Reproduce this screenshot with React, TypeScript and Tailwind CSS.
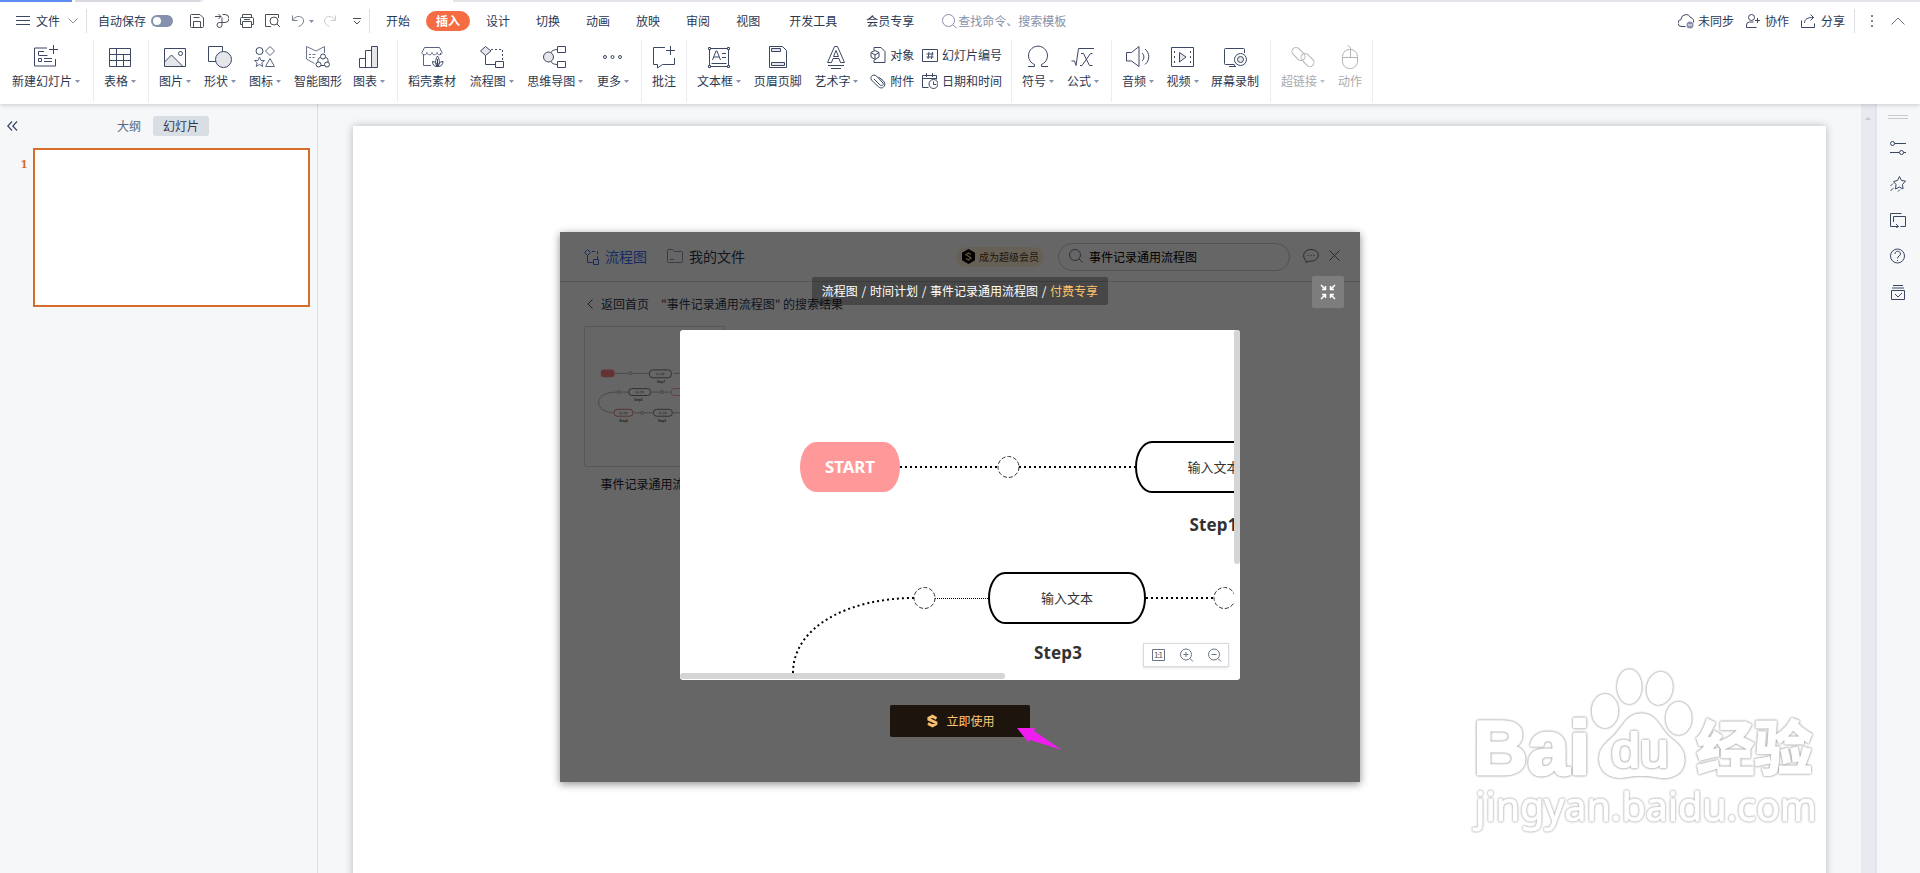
import React from 'react';

const INK = '#3b4763';
const FILL = '#e4e6ea';

interface GlyphProps {
    w?: number;
    h?: number;
    color?: string;
    className?: string;
    children: React.ReactNode;
}

const Glyph: React.FC<GlyphProps> = ({ w = 24, h = 24, color = INK, className = '', children }) => (
    <svg width={w} height={h} viewBox={`0 0 ${w} ${h}`} fill="none" stroke={color} strokeWidth="1" className={`shrink-0 ${className}`}>
        {children}
    </svg>
);

const Caret: React.FC<{ muted?: boolean }> = ({ muted }) => (
    <svg width="5" height="3" viewBox="0 0 5 3" className="shrink-0" fill={muted ? '#b9bfcd' : '#8791ab'}>
        <path d="M0 0h5L2.500 3z" />
    </svg>
);

interface RibbonItemProps {
    label: string;
    caret?: boolean;
    muted?: boolean;
    className?: string;
    children: React.ReactNode;
}

const RibbonItem: React.FC<RibbonItemProps> = ({ label, caret, muted, className = '', children }) => (
    <div className={`flex shrink-0 flex-col items-center pt-[5px] ${className}`}>
        <Glyph color={muted ? '#b4b4b4' : INK}>{children}</Glyph>
        <div className={`mt-1 flex h-4 items-center gap-[3px] ${muted ? 'text-[#aaaaaa]' : ''}`}>
            <span>{label}</span>
            {caret && <Caret muted={muted} />}
        </div>
    </div>
);

const RibbonGroup: React.FC<{ className?: string; children: React.ReactNode }> = ({ className = '', children }) => (
    <div className={`flex h-[62px] shrink-0 justify-between border-r border-[#ececf0] ${className}`}>{children}</div>
);

const Divider = ({ className = '' }: { className?: string }) => <div className={`h-6 w-px shrink-0 bg-[#dddde5] ${className}`} />;

const TabBar = () => (
    <div className="flex h-[38px] items-center">
        <Glyph w={14} h={12} className="ml-4"><path d="M0 1.500h14M0 5.500h14M0 9.500h14" /></Glyph>
        <span className="ml-[6px]">文件</span>
        <Glyph w={10} h={6} className="ml-2" color="#8c8f99"><path d="M.5.5 5 5 9.500.5" /></Glyph>
        <Divider className="ml-2" />
        <span className="ml-[11px]">自动保存</span>
        <div className="ml-[5px] flex h-3 w-[22px] items-center rounded-full bg-[#8391ad] pl-[2px]">
            <div className="size-2 rounded-full bg-white" />
        </div>
        <Glyph w={14} h={14} className="ml-[17px]" color="#4a4e57">
            <path d="M.5 1.500a1 1 0 0 1 1-1h8.500l3.500 3.500v8.500a1 1 0 0 1-1 1h-11a1 1 0 0 1-1-1zM3.500 3.500h6M3.500 13V7.500h7V13" />
        </Glyph>
        <Glyph w={14} h={14} className="ml-[11px]" color="#4a4e57">
            <path d="M0 2.500h6M3.500 0 6 2.500 3.500 5M7.500.5H10a3.500 3.500 0 0 1 0 8H4.500" />
            <path d="M4.500 8.500a2.500 2.500 0 1 0 2.500 2.500V3.500" />
        </Glyph>
        <Glyph w={14} h={14} className="ml-[11px]" color="#4a4e57">
            <path d="M2.500 3.500v-3h9v3M2.500 10.500h-2v-6a1 1 0 0 1 1-1h11a1 1 0 0 1 1 1v6h-2M2.500 7.500h9v6h-9zM4 5.500h6" />
        </Glyph>
        <Glyph w={16} h={14} className="ml-[11px]" color="#4a4e57">
            <path d="M6 12.500H.5V.5h13V4" />
            <circle cx="9" cy="7" r="4" /><path d="m12 10 3 3" />
        </Glyph>
        <Glyph w={13} h={12} className="ml-[11px]" color="#767d8d"><path d="M.5.5v5h5M.8 5C4-.5 12 1 11.500 6c-.3 3-2 4.500-5 5.500" /></Glyph>
        <div className="ml-1"><Caret /></div>
        <Glyph w={13} h={12} className="ml-[10px]" color="#c9ccd2"><path d="M11.500.5v5h-5M11.200 5C8-.5 0 1 .5 6c.3 3 2 4.500 5 5.500" /></Glyph>
        <Glyph w={8} h={8} className="ml-[16px]" color="#4a4e57"><path d="M0 1.500h8M1 4l3 3 3-3" /></Glyph>
        <Divider className="ml-2" />
        <span className="ml-4">开始</span>
        <span className="ml-4 flex h-5 w-11 items-center justify-center rounded-full bg-[#f56c42] font-bold text-white">插入</span>
        <div className="ml-4 flex gap-[26px]">
            <span>设计</span>
            <span>切换</span>
            <span>动画</span>
            <span>放映</span>
            <span>审阅</span>
            <span>视图</span>
        </div>
        <span className="ml-[29px]">开发工具</span>
        <span className="ml-[29px]">会员专享</span>
        <Glyph w={15} h={15} className="ml-[28px]" color="#8791ab"><circle cx="6.500" cy="6.500" r="6" /><path d="m11 11 3.500 3" /></Glyph>
        <span className="ml-[1px] text-[#8791ab]">查找命令、搜索模板</span>

        <div className="ml-auto flex items-center">
            <Glyph w={17} h={15} className="mr-[3px]">
                <path d="M7.500 12.500H4A3.500 3.500 0 0 1 3 5.500a5 5 0 0 1 9.500-2 4 4 0 0 1 3 5" />
                <circle cx="12" cy="11" r="3.500" fill="#8791ab" stroke="none" /><path d="M10 11h4" stroke="#fff" />
            </Glyph>
            <span>未同步</span>
            <Glyph w={14} h={14} className="mr-[5px] ml-3">
                <circle cx="5.500" cy="3.500" r="3" /><path d="M10.500 13.500H.5V11a3 3 0 0 1 3-3h4M11.500 4v5M9 6.500h5" />
            </Glyph>
            <span>协作</span>
            <Glyph w={15} h={14} className="mr-[5px] ml-[12px]">
                <path d="M.5 6.500v7h13v-4M3.500 9c0-4 3-5.500 9-5.500M9.500.5l3 3-3 3" />
            </Glyph>
            <span>分享</span>
            <Divider className="ml-[9px]" />
            <Glyph w={2} h={12} className="ml-4"><path d="M1 0v2M1 5v2M1 10v2" stroke="#7d8493" strokeWidth="2" /></Glyph>
            <Glyph w={14} h={8} className="mr-[15px] ml-[18px]" color="#6d7484"><path d="M.5 7.500 7 1l6.500 6.500" /></Glyph>
        </div>
    </div>
);

const SmallTool: React.FC<{ label: string; children: React.ReactNode }> = ({ label, children }) => (
    <div className="flex h-[26px] items-center gap-1">
        <Glyph w={16} h={16}>{children}</Glyph>
        <span>{label}</span>
    </div>
);

const Ribbon = () => (
    <div className="flex h-16">
        <RibbonGroup className="w-[94px] pr-3 pl-[12px]">
            <RibbonItem label="新建幻灯片" caret>
                <path d="M13 3H.5v18h21v-7M19.500 0v9M15 4.500h9M4.500 10V6.500H10M4.500 10.500h9M4.500 13.500h3v3h-3zM10 13.500h8M10 16.500h8" />
            </RibbonItem>
        </RibbonGroup>
        <RibbonGroup className="w-[55px] pr-[11px] pl-[10px]">
            <RibbonItem label="表格" caret>
                <path d="M1.500 3.500h21v18h-21zM1.500 9.500h21M1.500 15.500h21M8.500 3.500v18M15.500 9.500v12" />
            </RibbonItem>
        </RibbonGroup>
        <RibbonGroup className="w-[249px] pr-3 pl-[10px]">
            <RibbonItem label="图片" caret>
                <path d="m1.500 17 7-7 11 11.500h-18z" fill={FILL} stroke="none" />
                <path d="M1.500 3.500h21v18h-21zM1.500 17l7-7 11.500 11.500" /><circle cx="17.500" cy="8.500" r="2" />
            </RibbonItem>
            <RibbonItem label="形状" caret>
                <path d="M.5 1.500h14v15H.5z" /><circle cx="15.500" cy="14.500" r="8" fill={FILL} />
            </RibbonItem>
            <RibbonItem label="图标" caret>
                <circle cx="6.500" cy="6" r="3.500" /><path d="m17 1.500 4.500 4.500-4.500 4.500L12.500 6zM17 13.500l4.500 8h-9zM6.500 12l1.500 3.500h3.500l-2.700 2.300 1 3.700-3.300-2-3.300 2 1-3.700-2.700-2.300H5z" stroke="#59647e" />
            </RibbonItem>
            <RibbonItem label="智能图形">
                <path d="M8.500 18.500.5 14V1.500L10 6l8.500-4.500V8M3 9.500h2M6.500 9.500h3M3 12.500h2M6.500 12.500h2" stroke="#6a748c" />
                <circle cx="17" cy="11.500" r="2.500" /><circle cx="12.500" cy="19.500" r="2.500" /><circle cx="21" cy="19.500" r="2.500" />
                <path d="M14.500 12c-2 1-3 3-2.500 5M19.500 12c2 1 3 3 2.500 5M15 20.500h3.500" />
            </RibbonItem>
            <RibbonItem label="图表" caret className="-ml-[2px]">
                <path d="M2.500 13.500h6v9h-6zM8.500 5.500h6v17h-6z" /><path d="M14.500 1.500h6v21h-6z" fill={FILL} />
            </RibbonItem>
        </RibbonGroup>
        <RibbonGroup className="w-[244px] pr-3 pl-[10px]">
            <RibbonItem label="稻壳素材">
                <path d="M11 20.500H3.500V9M20.500 8v2M4.500 2.500h15l2.500 5c0 3-5 3-5 0 0 3-5 3-5 0 0 3-5 3-5 0 0 3-5 3-5 0z" stroke="#59647e" />
                <path d="M17.500 22c-2.500-3-2.500-7 0-11 2.500 4 2.500 8 0 11zM17 21.500c-3 0-4.500-2-4.500-5 3 0 4.500 2 4.500 5zM18 21.500c3 0 5-2 5-5-3 0-5 2-5 5zM17.500 14v7" />
            </RibbonItem>
            <RibbonItem label="流程图" caret>
                <path d="M5.500 1.500 11 6l-5.500 4.500L.5 6z" fill={FILL} /><path d="M5.500 10.500v9h10M15.500 16.500h8v6h-8z" /><path d="M11 4.500h11.500v12" strokeDasharray="2 2" />
            </RibbonItem>
            <RibbonItem label="思维导图" caret>
                <circle cx="5.500" cy="12" r="5" fill={FILL} /><path d="M14.500 1.500h8v6h-8zM14.500 16.500h8v6h-8zM8 7.500c1-2 3-3 6.500-3M8 16.500c1 2 3 3 6.500 3" />
            </RibbonItem>
            <RibbonItem label="更多" caret>
                <circle cx="4" cy="12" r="1.500" /><circle cx="11.500" cy="12" r="1.500" /><circle cx="19" cy="12" r="1.500" />
            </RibbonItem>
        </RibbonGroup>
        <RibbonGroup className="w-[45px] pr-[10px] pl-[10px]">
            <RibbonItem label="批注">
                <path d="M13 2.500H1.500v17h4V23l5-3.500h12V13M18.500 1v9M14 5.500h9" />
            </RibbonItem>
        </RibbonGroup>
        <RibbonGroup className="w-[325px] pr-[9px] pl-[10px]">
            <RibbonItem label="文本框" caret>
                <path d="M2.500 3.500h19v18h-19zM4.500 18.500h15M5.500 15l3.500-9h1l3.500 9M7 12h5M15 8.500h4M15 12.500h4" />
                <path d="M1.500 2.500h2v2h-2zM20.500 2.500h2v2h-2zM1.500 20.500h2v2h-2zM20.500 20.500h2v2h-2z" fill="#fff" />
            </RibbonItem>
            <RibbonItem label="页眉页脚">
                <path d="M3.500 1.500h13l4 4v17h-17z" /><path d="M5.500 3.500h9v3h-9zM5.500 17.500h13v3h-13z" fill={FILL} />
            </RibbonItem>
            <RibbonItem label="艺术字" caret>
                <path d="M10.500 1.500h3l7 16h-4l-1.500-4H9l-1.500 4h-4zM12 5.500l-2.500 6h5zM4 20.500h16M7 23.500h10" />
            </RibbonItem>
            <div className="-ml-px flex flex-col pt-[2px]">
                <SmallTool label="对象">
                    <path d="M4 3.500v-3h7l4 4v11H4V13" /><path d="M5 3.500 9 5.500v4.500l-4 2.500-4-2.500V5.500zM1 5.500l4 2.500 4-2.500M5 8v4.500" />
                </SmallTool>
                <SmallTool label="附件">
                    <path d="m4 6 6 6c2 1.500 4-.5 3-2L6.500 3C3 .5-.5 3.500 1.500 7l6 6c3 2.500 5 2.500 6.500.5s1-4-1-6L8.500 4" />
                </SmallTool>
            </div>
            <div className="-ml-[5px] flex flex-col pt-[2px]">
                <SmallTool label="幻灯片编号">
                    <path d="M.5 2.500h15v12H.5zM7 5 6 12M10.500 5l-1 7M4.500 7h7M4.500 10h7" />
                </SmallTool>
                <SmallTool label="日期和时间">
                    <path d="M6.500 14.500h-6v-12h14v4M.5 5.500h14M4.500 0v4M10.500 0v4" /><circle cx="11.500" cy="11" r="4.500" /><path d="M11.500 8.500v3h3" />
                </SmallTool>
            </div>
        </RibbonGroup>
        <RibbonGroup className="w-[100px] pr-[12px] pl-[10px]">
            <RibbonItem label="符号" caret>
                <path d="M2 21.500h6.500v-2A9.500 9.500 0 1 1 15.500 19.500v2H22" />
            </RibbonItem>
            <RibbonItem label="公式" caret>
                <path d="M.5 16h3l1.500 4.500L7.500 3.500H23M10 8.500h2.500l6 12h3M21.500 8.500h-2L11 20.500H9" />
            </RibbonItem>
        </RibbonGroup>
        <RibbonGroup className="w-[159px] pr-[11px] pl-[10px]">
            <RibbonItem label="音频" caret>
                <path d="M.5 7.500h5l7.500-6v20l-7.500-5.500h-5zM16 8c2.500 2 2.500 6 0 8M19 4c5 4 5 11.500 0 15.500" />
            </RibbonItem>
            <RibbonItem label="视频" caret>
                <path d="M1.500 2.500h22v19h-22z" /><path d="m9.500 7.500 6.500 4.500-6.500 5z" fill={FILL} /><path d="M4.500 6v15M20.500 6v15" strokeDasharray="2 3" />
            </RibbonItem>
            <RibbonItem label="屏幕录制">
                <path d="M11 19.500H2.500a1 1 0 0 1-1-1v-14a1 1 0 0 1 1-1h18a1 1 0 0 1 1 1V8M11.500 19.500v2.500M6 21.500h7" /><circle cx="17.500" cy="14.500" r="6" fill="#fff" /><circle cx="17.500" cy="14.500" r="3" fill={FILL} />
            </RibbonItem>
        </RibbonGroup>
        <RibbonGroup className="w-[102px] pr-[10px] pl-[10px]">
            <RibbonItem label="超链接" caret muted>
                <rect x="0" y="5" width="15" height="8" rx="4" transform="rotate(45 7.500 9)" /><rect x="9" y="11" width="15" height="8" rx="4" transform="rotate(45 16.500 15)" />
            </RibbonItem>
            <RibbonItem label="动作" muted>
                <rect x="4.500" y="4.500" width="15" height="19" rx="7" /><path d="M4.500 12.500h15M12.500 12.500V2.500l-3-2" />
            </RibbonItem>
        </RibbonGroup>
    </div>
);

const SlidePanel = () => (
    <aside className="flex w-[318px] shrink-0 flex-col border-r border-[#dddfe4]">
        <div className="flex h-11 items-center pb-px pl-[7px]">
            <Glyph w={11} h={10}><path d="M5 .5.8 5 5 9.500M10 .5 5.800 5 10 9.500" strokeWidth="1.200" /></Glyph>
            <span className="ml-[99px] text-[#5a6680]">大纲</span>
            <span className="ml-3 flex h-5 w-14 items-center justify-center rounded-[3px] bg-[#d9dde4]">幻灯片</span>
        </div>
        <div className="flex">
            <span className="w-[33px] pt-2 pl-[21px] font-['Noto_Serif','DejaVu_Serif',serif] text-[11px] leading-4 font-bold text-[#d9661f]">1</span>
            <div className="h-[159px] w-[277px] border-2 border-[#d66d2d] bg-white" />
        </div>
    </aside>
);

const TaskPane = () => (
    <aside className="flex w-[43px] shrink-0 flex-col items-center pr-[2px]">
        <Glyph w={20} h={6} className="mt-[10px]" color="#c6c9cf"><path d="M0 1.500h20M0 4.500h20" /></Glyph>
        <Glyph w={16} h={16} className="mt-5"><circle cx="2.500" cy="3.500" r="2" /><path d="M4.500 3.500H16M0 12.500h9.500M13.500 12.500H16" /><circle cx="11.500" cy="12.500" r="2" /></Glyph>
        <Glyph w={16} h={16} className="mt-5">
            <path d="m9.500.5 2 4 4 .5-3 3.500.5 4.500-3.500-2-4 2 .5-4.500-2.500-3 4-1zM3 7.500.5 10M3.500 12l-3 3M10 13.500l-2 2" />
        </Glyph>
        <Glyph w={16} h={16} className="mt-5"><path d="M11.500 1.500H.5v13h7M3.500 10V4.500h12v10h-5M4.500 14.500h4M6 12l2.500 2.500L6 16" /></Glyph>
        <Glyph w={16} h={16} className="mt-5"><circle cx="7.500" cy="8" r="7" /><path d="M5 6c0-4 5.500-3.500 5.500 0 0 2-3 2-3 4.500M7.500 12v1" /></Glyph>
        <Glyph w={16} h={16} className="mt-5"><path d="M3 1.500h10M2 4h12M1.500 6.500h13v9h-13zM5 10l3 3 4-4" /></Glyph>
    </aside>
);

const ResultCard = () => (
    <div className="w-[141px]">
        <svg width="141" height="141" viewBox="0 0 141 141" fill="none" className="rounded-[2px] border border-[#d8dade]">
            <rect x="16" y="43" width="14" height="8" rx="3" fill="#ff8080" />
            <path d="M30 47h36M90 47h30M45 66H32C8 66 8 87 30 87M67 66h20M49 87h20M89 87h30" stroke="#b5b5b5" />
            <g fill="#fff" stroke="#aaa">
                <circle cx="46" cy="47" r="1.500" /><circle cx="34" cy="66" r="1.500" /><circle cx="78" cy="66" r="1.500" /><circle cx="58" cy="87" r="1.500" />
            </g>
            <g fill="#fff" stroke="#777">
                <rect x="65.500" y="43.500" width="22" height="8" rx="3" />
                <rect x="44.500" y="62.500" width="22" height="7" rx="3" />
                <rect x="69.500" y="83.500" width="19" height="7" rx="3" />
            </g>
            <rect x="87.500" y="62.500" width="22" height="7" rx="3" stroke="#f3a0a0" />
            <rect x="29.500" y="83.500" width="19" height="7" rx="3" fill="#fff" stroke="#d08080" />
            <g fill="#555" className="font-['Noto_Sans',sans-serif] text-[3px] font-bold">
                <text x="73" y="56.500">Step1</text><text x="50" y="75">Step3</text><text x="35" y="96.500">Step4</text><text x="74" y="96.500">Step5</text>
            </g>
            <g fill="#666" className="font-['Noto_Sans_CJK_SC',sans-serif] text-[2px]">
                <text x="72.500" y="48.500">输入文本</text><text x="51.500" y="67">输入文本</text><text x="35" y="88">输入文本</text><text x="75" y="88">输入文本</text>
            </g>
        </svg>
        <div className="mt-[9px] text-center leading-4 text-[#1b2030]">事件记录通用流程图</div>
    </div>
);

const FlowChart = () => (
    <svg width="554" height="343" viewBox="0 0 554 343" fill="none" className="block">
        <rect x="120" y="112" width="100" height="50" rx="16" ry="25" fill="#ff9999" />
        <g stroke="#000" strokeWidth="2">
            <path d="M220 137h97M339 137h116M466 268h67" strokeDasharray="2 3" />
            <path d="M234 268C170 268 113 296 113 343" strokeDasharray="2 3" />
            <rect x="456" y="112" width="156" height="50" rx="16" ry="25" />
            <rect x="309" y="243" width="156" height="50" rx="16" ry="25" />
        </g>
        <path d="M255 268.500h53" stroke="#000" strokeDasharray="1 1" />
        <g stroke="#333" strokeDasharray="4 2">
            <circle cx="328.500" cy="137" r="10.500" /><circle cx="244.500" cy="268" r="10.500" /><circle cx="544.500" cy="268" r="10.500" />
        </g>
        <g className="font-['Noto_Sans_CJK_SC',sans-serif] text-[13px]" fill="#323232">
            <text x="507.500" y="142">输入文本</text>
            <text x="361" y="273">输入文本</text>
        </g>
        <g className="font-['Noto_Sans','Open_Sans',sans-serif] font-bold" fill="#323232">
            <text x="145" y="142.500" fill="#fff" className="text-[16px]" textLength="50" lengthAdjust="spacingAndGlyphs">START</text>
            <text x="509.500" y="201" className="text-[17px]" textLength="48">Step1</text>
            <text x="354" y="329" className="text-[17px]" textLength="48">Step3</text>
        </g>
    </svg>
);

const PreviewOverlay = () => (
    <div className="absolute inset-0 flex flex-col items-center bg-black/60">
        <div className="mt-[45px] flex h-7 w-[296px] items-center justify-center rounded-[2px] bg-black/30 whitespace-pre text-white [word-spacing:1px]">
            流程图 / 时间计划 / 事件记录通用流程图 / <span className="text-[#ffc36b]">付费专享</span>
        </div>
        <button className="absolute top-11 right-4 flex size-8 items-center justify-center rounded-[2px] bg-[#7d7d7d]">
            <Glyph w={16} h={16} color="#fff">
                <path d="m1 1 4 4M5.500 2v3.500H2M15 1l-4 4M10.500 2v3.500H14M1 15l4-4M5.500 14v-3.500H2M15 15l-4-4M10.500 14v-3.500H14" strokeWidth="1.500" />
            </Glyph>
        </button>

        <div className="relative mt-[25px] h-[350px] w-[560px] shrink-0 overflow-hidden rounded-[3px] bg-white">
            <FlowChart />
            <div className="absolute top-0 right-0 h-[234px] w-[6px] rounded-full bg-[#d5d5d5]" />
            <div className="absolute bottom-px left-0 h-[6px] w-[325px] rounded-full bg-[#d5d5d5]" />
            <div className="absolute right-[11px] bottom-[13px] flex h-6 w-[86px] items-center justify-between border border-[#d9dbe0] bg-white pr-[6px] pl-[8px] shadow-sm">
                <svg width="14" height="13" viewBox="0 0 14 13" fill="none" stroke="#6b7486">
                    <path d="M.5.5h12v11H.5z" /><text x="2" y="9" stroke="none" fill="#555" className="text-[8px]" textLength="9">1:1</text>
                </svg>
                <Glyph w={14} h={14} color="#6b7486"><circle cx="6" cy="6.500" r="5.500" /><path d="m10 10.500 3 3M3.500 6.500h5M6 4v5" /></Glyph>
                <Glyph w={14} h={14} color="#6b7486"><circle cx="6" cy="6.500" r="5.500" /><path d="m10 10.500 3 3M3.500 6.500h5" /></Glyph>
            </div>
        </div>

        <button className="mt-[25px] flex h-8 w-[140px] items-center justify-center gap-2 rounded-[2px] bg-[#1d150d] pl-px text-[#ffc677]">
            <Glyph w={12} h={14} color="#f8bf70">
                <path d="M10.500 4.500 6.500 2.200 2.800 4.200v1.200l7.200 3.200v1.400L6.500 12 2 9.500" strokeWidth="2.800" />
            </Glyph>
            立即使用
        </button>
        <svg width="46" height="23" viewBox="0 0 46 23" className="absolute top-[495px] left-[457px]">
            <path d="M0 1h18l-1 3 28 19-32-10-2 2z" fill="#f01df0" />
        </svg>
    </div>
);

const FlowChartDialog = () => (
    <div className="absolute top-[106px] left-[207px] h-[550px] w-[800px] bg-white shadow-[0_2px_8px_rgba(0,0,0,0.45)]">
        <header className="flex h-[50px] items-center border-b border-[#d4d6dc] pl-6">
            <Glyph w={16} h={16} color="#3a6ff0">
                <path d="m3.500.5 3 3-3 3-3-3zM3.500 6.500v7h6M9.500 10.500h5v5h-5z" /><path d="M8 2.500h5.500v8" strokeDasharray="3 2" />
            </Glyph>
            <span className="mb-px ml-[5px] text-sm text-[#3a6ff0]">流程图</span>
            <Glyph w={16} h={14} className="mb-[2px] ml-5" color="#8a93a8"><path d="M.5 1.500a1 1 0 0 1 1-1h4l2 2h7a1 1 0 0 1 1 1v9a1 1 0 0 1-1 1h-13a1 1 0 0 1-1-1zM3 10.500h4" /></Glyph>
            <span className="mb-px ml-[6px] text-sm">我的文件</span>
            <div className="ml-auto flex h-5 w-[88px] items-center gap-1 rounded-full bg-[#fff0da] pl-[6px] text-[10px] text-[#5a3c18]">
                <svg width="13" height="15" viewBox="0 0 13 15" fill="none">
                    <path d="m6.500 0 6.500 3.700v7.600L6.500 15 0 11.300V3.700z" fill="#000" /><path d="M9 5.500 6.500 4 4 5.500l5 3.500-2.500 2L4 9.500" stroke="#f6cf94" strokeWidth="1.400" />
                </svg>
                成为超级会员
            </div>
            <div className="ml-[14px] flex h-7 w-[232px] items-center rounded-full border border-[#c8ccd4] pl-[10px] text-black">
                <Glyph w={14} h={14} className="mr-[6px] mb-px" color="#6b7690"><circle cx="6" cy="6" r="5.500" /><path d="m10 10 3.500 3.500" /></Glyph>
                事件记录通用流程图
            </div>
            <Glyph w={16} h={14} className="mb-[2px] ml-[13px]" color="#5a6680">
                <path d="M3 11.500C-1.500 8 .5.5 8 .5s9.500 6.500 5 10c-2 1.800-5 2-6.500 1.500L3 13.500z" /><path d="M4.500 6.500h1M7.500 6.500h1M10.500 6.500h1" />
            </Glyph>
            <Glyph w={11} h={11} className="mr-5 mb-[2px] ml-[10px]" color="#5a6680"><path d="m.5.5 10 10M10.500.5l-10 10" /></Glyph>
        </header>
        <div className="flex h-11 items-center pl-[27px]">
            <Glyph w={6} h={10}><path d="M5.500.5 1 5l4.500 4.500" /></Glyph>
            <span className="ml-2">返回首页</span>
            <span className="ml-3 whitespace-pre">"事件记录通用流程图" 的搜索结果</span>
        </div>
        <div className="pl-6"><ResultCard /></div>
        <PreviewOverlay />
    </div>
);

const Watermark = () => (
    <svg width="360" height="180" viewBox="45 30 1080 540" className="absolute top-[534px] left-[1112px]" fill="#fff" strokeLinejoin="round">
        <g className="[filter:drop-shadow(0_0_3px_#9a9a9a)_drop-shadow(0_0_2px_#c4c4c4)]">
            <ellipse cx="465" cy="183" rx="40" ry="51" />
            <ellipse cx="538" cy="110" rx="37" ry="52" />
            <ellipse cx="629" cy="115" rx="39" ry="50" transform="rotate(10 629 115)" />
            <ellipse cx="686" cy="205" rx="39" ry="50" />
            <path d="M575 190c45 0 55 45 85 72 27 22 44 35 44 68 0 43-40 58-73 54-35-8-70-8-100-2-45 8-84-12-84-56 0-35 25-50 50-75 25-27 35-61 78-61z" />
            <text x="70" y="373" fontSize="228" textLength="350" lengthAdjust="spacingAndGlyphs" stroke="#fff" strokeWidth="9" className="font-['Liberation_Sans',sans-serif] font-bold">Bai</text>
            <text x="738" y="361" fontSize="176" textLength="350" stroke="#fff" strokeWidth="3" className="font-['Noto_Sans_CJK_SC',sans-serif] font-black">经验</text>
        </g>
        <text x="484" y="350" fontSize="142" textLength="172" lengthAdjust="spacingAndGlyphs" stroke="#fff" strokeWidth="7" className="font-['Liberation_Sans',sans-serif] [filter:drop-shadow(0_0_3px_#9a9a9a)_drop-shadow(0_0_2px_#c4c4c4)]">du</text>
        <text x="76" y="513" fontSize="119" textLength="1024" lengthAdjust="spacingAndGlyphs" stroke="#fff" strokeWidth="3" className="font-['Noto_Sans',sans-serif] [filter:drop-shadow(0_0_3px_#a8a8a8)_drop-shadow(0_0_2px_#d0d0d0)]">jingyan.baidu.com</text>
    </svg>
);

export default function App() {
    return (
        <div className="flex h-[873px] w-[1920px] flex-col overflow-hidden bg-[#f5f7f9] font-['Noto_Sans_CJK_SC',sans-serif] text-xs whitespace-nowrap text-[#2c3852]">
            <div className="relative z-10 bg-white shadow-[0_1px_5px_rgba(0,0,0,0.18)]">
                <div className="flex h-[2px]">
                    <div className="w-[72px] bg-[#5b8cf5]" />
                    <div className="ml-[3px] w-[125px] bg-[#d9d9e0]" />
                    <div className="w-[3px] bg-[#e8e8ee]" />
                    <div className="ml-auto w-[1467px] bg-[#e2e2e9]" />
                </div>
                <TabBar />
                <Ribbon />
            </div>
            <div className="flex min-h-0 flex-1">
                <SlidePanel />
                <main className="min-w-0 flex-1 overflow-hidden pt-[22px] pl-[35px]">
                    <div className="relative h-[800px] w-[1473px] bg-white shadow-[0_0_8px_rgba(0,0,0,0.25)]">
                        <FlowChartDialog />
                        <Watermark />
                    </div>
                </main>
                <div className="flex w-4 shrink-0 justify-center border-r-2 border-[#e2e4ec] bg-[#e8eaf0] pt-[13px]">
                    <svg width="6" height="3" viewBox="0 0 6 3" fill="#c5c8cf"><path d="M3 0l3 3H0z" /></svg>
                </div>
                <TaskPane />
            </div>
        </div>
    );
}
